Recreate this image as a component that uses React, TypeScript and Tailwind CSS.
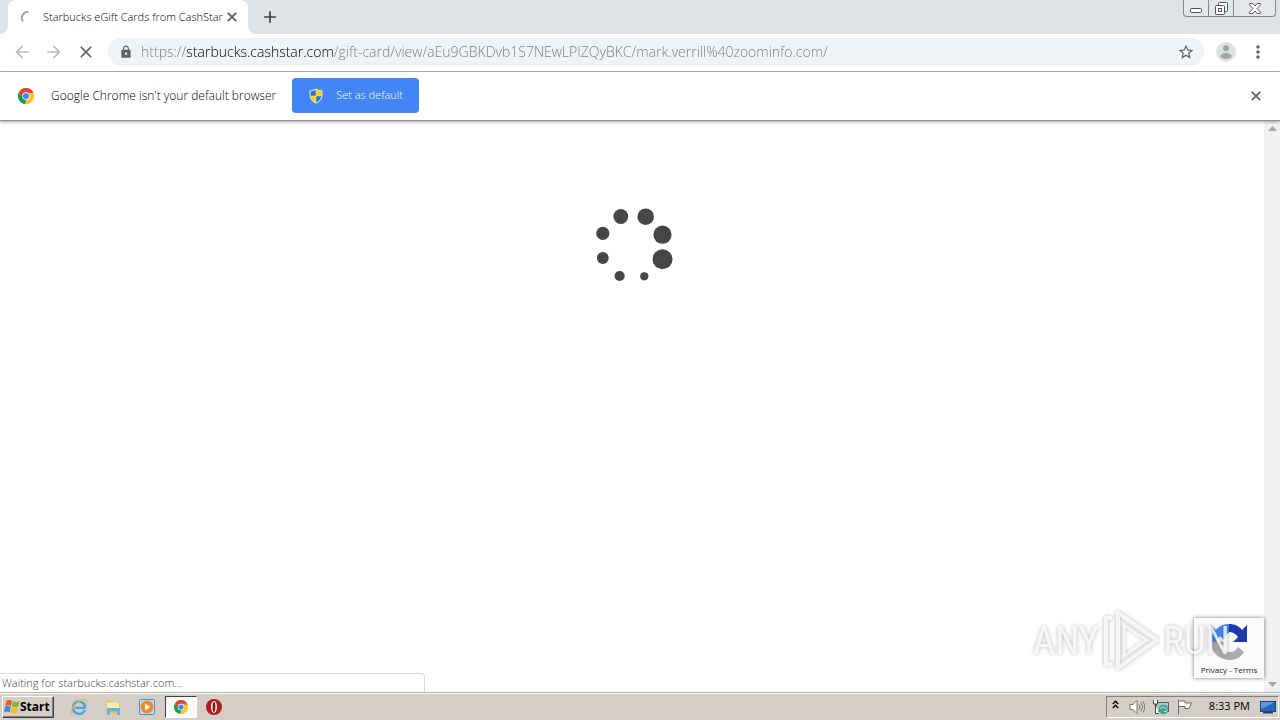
import { useState } from "react";
import {
  MdAdd,
  MdArrowBack,
  MdArrowForward,
  MdClose,
  MdLock,
  MdMoreVert,
  MdStarBorder,
} from "react-icons/md";

function ChromeLogo({ className }: { className: string }) {
  return (
    <svg className={className} viewBox="0 0 48 48" aria-hidden="true">
      <circle cx="24" cy="24" r="24" fill="#fbc62f" />
      <path d="M3.200 12A24 24 0 0 1 44.800 12L24 13.500 14 29.800z" fill="#dd4437" />
      <path d="M3.200 12 14.500 29.500 24 34.500 22 48A24 24 0 0 1 3.200 12z" fill="#1a9c5a" />
      <path d="M44.800 12A24 24 0 0 1 22 48L33.500 29.500 34 18 24 13z" fill="#fbc62f" />
      <path d="M24 12H44.800L46 15H30z" fill="#dd4437" />
      <circle cx="24" cy="24" r="11" fill="#fff" />
      <circle cx="24" cy="24" r="9" fill="#4285f4" />
    </svg>
  );
}

function SmallClose() {
  return (
    <svg className="h-4 w-4" viewBox="0 0 16 16" fill="none" stroke="currentColor" strokeWidth="1.900" aria-hidden="true">
      <path d="M3.800 3.800 12.200 12.200M12.200 3.800 3.800 12.200" />
    </svg>
  );
}

function ShieldIcon() {
  return (
    <svg className="h-4 w-4" viewBox="0 0 16 16" aria-hidden="true">
      <path d="M8 .5Q5 2.500 1.500 2.300V7c0 4.200 2.800 7 6.500 8.500C11.700 14 14.500 11.200 14.500 7V2.300Q11 2.500 8 .5z" fill="#dcd9b8" />
      <path d="M7.700 1.900Q5.500 3.300 2.800 3.300V7.700h4.900z" fill="#2f6fc4" />
      <path d="M8.300 1.900Q10.500 3.300 13.200 3.300V7.700H8.300z" fill="#f7d117" />
      <path d="M2.800 8.200h4.900v6C5 13 3.200 11 2.800 8.200z" fill="#f7d117" />
      <path d="M13.200 8.200H8.300v6C11 13 12.800 11 13.200 8.200z" fill="#2f6fc4" />
    </svg>
  );
}

function TabStrip() {
  return (
    <header className="flex h-[34px] items-stretch bg-[#dee1e6]">
      <div className="flex w-2 bg-white">
        <span className="flex-1 rounded-br-lg bg-[#dee1e6]" />
      </div>
      <div className="flex w-60 items-center rounded-t-lg bg-white pr-2 pl-3">
        <svg className="h-4 w-4 shrink-0" viewBox="0 0 16 16" fill="none" aria-hidden="true">
          <path d="M3 12.500A6 6 0 0 1 8.500 3" stroke="#9a9da1" strokeWidth="1.800" />
        </svg>
        <span className="ml-[7px] min-w-0 flex-1 text-[11px] font-light whitespace-nowrap text-black">
          Starbucks eGift Cards from CashStar
        </span>
        <button type="button" aria-label="Close tab" className="shrink-0 text-[#5f6368]">
          <SmallClose />
        </button>
      </div>
      <div className="flex w-2 bg-white">
        <span className="flex-1 rounded-bl-lg bg-[#dee1e6]" />
      </div>
      <button type="button" aria-label="New tab" className="ml-1 text-[#3c4043]">
        <MdAdd className="h-5 w-5" />
      </button>
      <div className="mr-1 ml-auto flex h-[17px] rounded-b border border-t-0 border-[#84888f] bg-[#e3e6ea]">
        <button type="button" aria-label="Minimize" className="flex w-[25px] items-end justify-center border-r border-[#84888f] pb-[3px]">
          <svg className="h-[5px] w-3" viewBox="0 0 12 5" aria-hidden="true">
            <rect x=".5" y=".5" width="11" height="4" rx="1" fill="#fff" stroke="#4d5157" />
          </svg>
        </button>
        <button type="button" aria-label="Restore" className="flex w-[25px] items-center justify-center border-r border-[#84888f]">
          <svg className="h-[13px] w-[13px]" viewBox="0 0 13 13" fill="#fff" stroke="#4d5157" aria-hidden="true">
            <rect x="3.500" y=".5" width="9" height="9" rx="1" />
            <rect x=".5" y="3.500" width="9" height="9" rx="1" />
            <rect x="3.500" y="6.500" width="3" height="3" />
          </svg>
        </button>
        <button type="button" aria-label="Close" className="flex w-[41px] items-center justify-center">
          <svg className="h-[11px] w-3" viewBox="0 0 12 11" aria-hidden="true">
            <path d="M.5.5h3.500L6 3 8 .5h3.500v1.300L8 5.500l3.500 3.700v1.300H8L6 8l-2 2.500H.5V9.200L4 5.500.5 1.800z" fill="#fff" stroke="#4d5157" strokeWidth=".9" />
          </svg>
        </button>
      </div>
    </header>
  );
}

function Toolbar() {
  const [url, setUrl] = useState(
    "https://starbucks.cashstar.com/gift-card/view/aEu9GBKDvb1S7NEwLPIZQyBKC/mark.verrill%40zoominfo.com/",
  );
  return (
    <nav className="flex h-[38px] items-center border-b border-[#b1b3b6] bg-white px-3 pb-[2px]">
      <div className="flex gap-3">
        <button type="button" aria-label="Back" className="text-[#b8babd]">
          <MdArrowBack className="h-5 w-5" />
        </button>
        <button type="button" aria-label="Forward" className="text-[#b8babd]">
          <MdArrowForward className="h-5 w-5" />
        </button>
        <button type="button" aria-label="Stop" className="text-[#5f6368]">
          <MdClose className="h-5 w-5" />
        </button>
      </div>
      <div className="ml-3 flex h-7 flex-1 items-center rounded-full bg-[#f0f3f5] pr-[9px] pl-[11px]">
        <MdLock className="h-[14px] w-[14px] text-[#5f6368]" />
        <input
          type="text"
          aria-label="Address"
          value={url}
          onChange={(e) => setUrl(e.target.value)}
          className="ml-2 min-w-0 flex-1 bg-[linear-gradient(90deg,#74797e_46px,#000_46px,#000_193px,#74797e_193px)] bg-clip-text text-[14px] font-light text-transparent outline-none"
        />
        <button type="button" aria-label="Bookmark" className="text-[#5f6368]">
          <MdStarBorder className="h-[18px] w-[18px]" />
        </button>
      </div>
      <button type="button" aria-label="Profile" className="ml-3">
        <svg className="h-5 w-5" viewBox="0 0 20 20" aria-hidden="true">
          <circle cx="10" cy="10" r="10" fill="#dfe0e2" />
          <circle cx="10" cy="6.300" r="3" fill="#a2a4a7" />
          <ellipse cx="10" cy="14" rx="5.700" ry="3" fill="#a2a4a7" />
        </svg>
      </button>
      <button type="button" aria-label="Menu" className="ml-3 text-[#5f6368]">
        <MdMoreVert className="h-5 w-5" />
      </button>
    </nav>
  );
}

function InfoBar() {
  return (
    <section className="relative z-10 flex h-[49px] items-center border-b border-[#8f9194] bg-white pr-4 pb-[1px] pl-[18px] shadow-[0_1px_3px_rgba(0,0,0,0.35)]">
      <ChromeLogo className="h-4 w-4" />
      <p className="ml-[17px] text-[12px] font-light whitespace-nowrap text-black">
        Google Chrome isn't your default browser
      </p>
      <button
        type="button"
        className="ml-4 flex h-[35px] items-center gap-3 rounded bg-[#4285f4] px-4 text-[11px] font-light text-white"
      >
        <ShieldIcon />
        Set as default
      </button>
      <button type="button" aria-label="Dismiss" className="ml-auto text-[#5f6368]">
        <SmallClose />
      </button>
    </section>
  );
}

const dots = [
  { x: 30.8, y: 16.5, r: 7.4 },
  { x: 55.7, y: 16.7, r: 8.3 },
  { x: 72.5, y: 34.7, r: 9.1 },
  { x: 72.5, y: 59.3, r: 10 },
  { x: 54.3, y: 76.3, r: 4.1 },
  { x: 29.6, y: 76, r: 5.1 },
  { x: 12.8, y: 58, r: 5.9 },
  { x: 12.8, y: 33.3, r: 6.6 },
];

function Watermark() {
  return (
    <div
      aria-hidden="true"
      className="pointer-events-none absolute right-[34px] bottom-5 flex items-center gap-[2px] font-['Roboto_Condensed','Roboto',sans-serif] text-[39px] leading-none text-white/80 [filter:drop-shadow(0_0_2px_rgba(0,0,0,0.35))]"
    >
      <span>ANY</span>
      <svg className="h-[62px] w-[60px]" viewBox="0 0 60 62" fill="none" stroke="currentColor" strokeLinejoin="round">
        <path d="M17 3 56 30 17 58z" strokeWidth="4" />
        <path d="M23 15 45 30 23 46z" strokeWidth="2" />
        <path d="M11 8H5v46h6" strokeWidth="4" />
      </svg>
      <span>RUN</span>
    </div>
  );
}

function RecaptchaBadge() {
  return (
    <aside className="absolute right-0 bottom-[14px] flex h-[60px] w-[70px] flex-col items-center bg-[#fafafa] pt-1 shadow-[0_0_4px_rgba(0,0,0,0.55)]">
      <svg className="h-10 w-10" viewBox="0 0 40 40" aria-hidden="true">
        <path d="M38 3v17H24l5-5c-2-3-5-5-9-5V2c6 0 10 2 13 6z" fill="#1c3aa9" />
        <path d="M20 2v9c-3 0-4 3-4 8L11 14c-2 2-3 4-3 6H2V3l5 5C10 4 15 2 20 2z" fill="#4285f4" />
        <path d="M2 20h14l-4 5c2 3 5 5 9 5 4 0 6-2 8-5l6 5c-3 5-8 8-14 8C11 38 2 31 2 20z" fill="#ababab" />
      </svg>
      <p className="text-[8px] leading-4 whitespace-nowrap text-[#222]">
        <a href="#privacy">Privacy</a> - <a href="#terms">Terms</a>
      </p>
    </aside>
  );
}

function Scrollbar() {
  return (
    <div className="flex w-4 flex-col items-center justify-between bg-[#f1f1f1] py-[5px]" aria-hidden="true">
      <svg className="h-[5px] w-[9px]" viewBox="0 0 9 5">
        <path d="M4.500 0 9 5H0z" fill="#a3a3a3" />
      </svg>
      <svg className="h-[5px] w-[9px]" viewBox="0 0 9 5">
        <path d="M4.500 5 9 0H0z" fill="#a3a3a3" />
      </svg>
    </div>
  );
}

function Page() {
  return (
    <main className="flex flex-1 bg-white">
      <div className="relative flex flex-1 flex-col justify-between">
        <svg className="mx-auto mt-[79px] h-[90px] w-[84px]" viewBox="0 0 84 90" role="img" aria-label="Loading">
          {dots.map((d) => (
            <circle key={d.x + "-" + d.y} cx={d.x} cy={d.y} r={d.r} fill="#464646" />
          ))}
        </svg>
        <RecaptchaBadge />
        <Watermark />
        <p className="h-[19px] w-[425px] rounded-tr border-t border-r border-[#d8d8d8] pl-[2px] text-[11px] leading-[18px] font-light text-[#3c4043]">
          Waiting for starbucks.cashstar.com...
        </p>
      </div>
      <Scrollbar />
    </main>
  );
}

function WindowsFlag() {
  return (
    <svg className="h-4 w-4 shrink-0" viewBox="0 0 16 16" aria-hidden="true">
      <path d="M2.700 1.600C4.700.6 6.200.8 8 1.900L6.900 7.100C5.200 6.100 3.400 6 1.400 6.800z" fill="#e8562a" />
      <path d="M8.800 2.300c2 1 4.200 1 6.800 0L14.400 7.600c-2 .9-4.600.8-6.700-.2z" fill="#7fb83a" />
      <path d="M1.200 7.700c2-.9 3.900-.7 5.500.2L5.600 13.200C3.900 12.200 2.100 12.100 0 13z" fill="#3a86d8" />
      <path d="M7.500 8.300c2 1 4.500 1 6.700.1L13 13.800c-2 .9-4.600.8-6.700-.2z" fill="#f6bf2a" />
    </svg>
  );
}

function Taskbar() {
  return (
    <footer className="flex h-7 items-center border-t border-[#b4b0aa] bg-[#d4cec7] pr-[1px] pl-[2px] shadow-[inset_0_1px_0_#fff]">
      <button
        type="button"
        className="flex h-[22px] w-[52px] items-center border border-t-white border-r-[#404040] border-b-[#404040] border-l-white pl-[1px] text-[12px] font-bold text-black shadow-[inset_-1px_-1px_0_#808080]"
      >
        <WindowsFlag />
        Start
      </button>
      <button type="button" aria-label="Internet Explorer" className="ml-4">
        <svg className="h-[18px] w-[18px]" viewBox="0 0 18 18" fill="none" aria-hidden="true">
          <path d="M15.500 9.800H5.200M14.800 12.200A6.200 6.200 0 1 1 15.300 9.300" stroke="#3fa5e4" strokeWidth="2.300" />
          <path d="M2.500 16.500C-1 14 4 5.500 11 2.300c3-1.300 6-1.500 5.500 1.700" stroke="#e8b93a" strokeWidth="1.200" />
        </svg>
      </button>
      <button type="button" aria-label="Explorer" className="ml-4">
        <svg className="h-[18px] w-[18px]" viewBox="0 0 18 18" aria-hidden="true">
          <path d="M2 2h5l1 2h8v12H2z" fill="#e7c765" />
          <path d="M3 4.500h12V13H3z" fill="#f9ecb0" />
          <path d="M3 10h13v7h-3v-3.500H6V17H3z" fill="#62b5e0" />
        </svg>
      </button>
      <button type="button" aria-label="Media Player" className="ml-4">
        <svg className="h-[18px] w-[18px]" viewBox="0 0 18 18" aria-hidden="true">
          <rect x="1.500" y="1.500" width="15" height="15" rx="1" fill="#b9daf4" stroke="#4d90c8" />
          <circle cx="9" cy="9" r="6.300" fill="#f08a1d" />
          <path d="M7 5.500 12.300 9 7 12.500z" fill="#fff" />
        </svg>
      </button>
      <button
        type="button"
        aria-label="Google Chrome"
        className="ml-[9px] flex h-[22px] w-8 items-center justify-center border border-t-[#404040] border-r-white border-b-white border-l-[#404040] bg-[#fbfafa]"
      >
        <ChromeLogo className="h-[14px] w-[14px]" />
      </button>
      <button type="button" aria-label="Opera" className="ml-[9px]">
        <svg className="h-4 w-4" viewBox="0 0 16 16" aria-hidden="true">
          <circle cx="8" cy="8" r="8" fill="#b3191d" />
          <ellipse cx="8" cy="8" rx="3" ry="6" fill="#fff" />
          <ellipse cx="8" cy="8" rx="1.400" ry="5" fill="#8d0f13" />
        </svg>
      </button>
      <div className="ml-auto flex h-[22px] items-center border border-t-[#808080] border-r-white border-b-white border-l-[#808080] pr-[2px] pl-[5px] text-black">
        <button type="button" aria-label="Show hidden icons" className="pb-1">
          <svg className="h-[9px] w-[7px]" viewBox="0 0 7 9" fill="none" stroke="#000" strokeWidth="1.400" aria-hidden="true">
            <path d="M.8 4 3.500 1.300 6.200 4M.8 8 3.500 5.300 6.200 8" />
          </svg>
        </button>
        <svg className="ml-[10px] h-4 w-4" viewBox="0 0 16 16" fill="none" stroke="#77797b" aria-hidden="true">
          <path d="M1 5.500h3L8 1.500v13l-4-4H1z" fill="#fff" />
          <path d="M10 5.500q1.500 2.500 0 5M12 3.500q3 4.500 0 9M14 2.500q3.500 5.500 0 11" />
        </svg>
        <svg className="ml-2 h-4 w-4" viewBox="0 0 16 16" aria-hidden="true">
          <rect x="3.500" y="3.500" width="12" height="9" fill="#a6c4d2" stroke="#51606a" />
          <path d="M.5 1v4h4V1M2.500 5v9.500H6" fill="#fff" stroke="#444" />
          <circle cx="10.500" cy="10.500" r="4.800" fill="#44a58f" />
          <path d="M7 9.500q3-3 6 0t-2 3" fill="none" stroke="#b8e6d2" />
        </svg>
        <svg className="ml-2 h-4 w-4" viewBox="0 0 16 16" fill="#fff" stroke="#66686a" aria-hidden="true">
          <path d="M1.500 1v14.500M1.500 2h6.500v2h6.500L12 9.500H8v-2H1.500z" />
        </svg>
        <time className="ml-4 text-[11px] whitespace-nowrap">8:33 PM</time>
        <button type="button" aria-label="Show desktop" className="ml-[10px]">
          <svg className="h-4 w-4" viewBox="0 0 16 16" aria-hidden="true">
            <rect x=".5" y="2.500" width="15" height="10" fill="#2763b8" stroke="#1c4280" />
            <path d="M1 3h14L1 10z" fill="#5d9be4" />
            <path d="M3 13h10v1.500H3z" fill="#26405f" />
          </svg>
        </button>
      </div>
    </footer>
  );
}

export default function App() {
  return (
    <div className="flex min-h-screen flex-col bg-white font-['Open_Sans','Noto_Sans',sans-serif]">
      <TabStrip />
      <Toolbar />
      <InfoBar />
      <Page />
      <Taskbar />
    </div>
  );
}
